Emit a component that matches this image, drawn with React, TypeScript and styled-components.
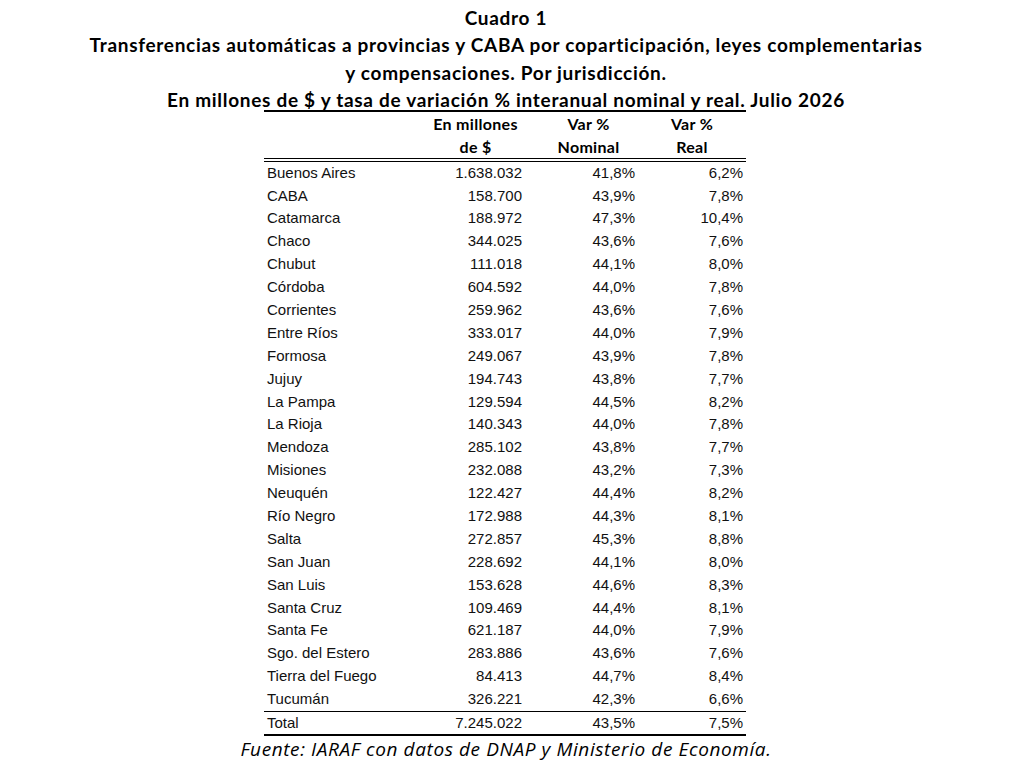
import React from "react";
import styled, { createGlobalStyle } from "styled-components";

const Global = createGlobalStyle`
  html, body { margin: 0; padding: 0; background: #ffffff; }
  body { width: 1010px; height: 770px; overflow: hidden; color: #000; }
`;

const Page = styled.div`
  width: 1010px;
  display: flex;
  flex-direction: column;
  align-items: center;
  padding-top: 4px;
`;

const Title = styled.h1`
  margin: 0;
  font-family: Lato, "Open Sans", sans-serif;
  font-weight: 700;
  font-size: 19px;
  letter-spacing: 0.7px;
  line-height: 27.4px;
  text-align: center;
  color: #000;
  transform: translateX(1px);
`;

const Table = styled.div`
  width: 482px;
  margin-top: -4px;
  display: grid;
  grid-template-columns: 150px 111px 113px 108px;
  border-top: 2px solid #000;
  border-bottom: 2px solid #000;
  font-family: "Liberation Sans", Arial, sans-serif;
  font-size: 15px;
  color: #111;
`;

const HeadCell = styled.div<{ $shift?: number; $last?: boolean }>`
  height: 23px;
  line-height: 23px;
  text-align: center;
  padding-left: ${(p) => p.$shift ?? 0}px;
  font-family: Lato, "Open Sans", sans-serif;
  font-weight: 700;
  font-size: 16px;
  letter-spacing: 0.3px;
  color: #000;
  ${(p) => (p.$last ? "border-bottom: 4px double #000;" : "")}
`;

const Cell = styled.div<{ $num?: boolean; $total?: boolean }>`
  height: ${(p) => (p.$total ? "22px" : "22.9px")};
  line-height: ${(p) => (p.$total ? "22px" : "22.9px")};
  white-space: nowrap;
  text-align: ${(p) => (p.$num ? "right" : "left")};
  padding: ${(p) => (p.$num ? "0 3px 0 0" : "0 0 0 3px")};
  ${(p) => (p.$total ? "border-top: 1px solid #000;" : "")}
`;

const NumCell = styled(Cell)`
  padding-right: 3px;
`;

const Source = styled.p`
  margin: 1px 0 0;
  font-family: "Open Sans", Lato, sans-serif;
  font-style: italic;
  font-size: 19px;
  letter-spacing: 0.6px;
  line-height: 24px;
  color: #000;
  transform: translateX(1px);
`;

const rows: [string, string, string, string][] = [
  ["Buenos Aires", "1.638.032", "41,8%", "6,2%"],
  ["CABA", "158.700", "43,9%", "7,8%"],
  ["Catamarca", "188.972", "47,3%", "10,4%"],
  ["Chaco", "344.025", "43,6%", "7,6%"],
  ["Chubut", "111.018", "44,1%", "8,0%"],
  ["Córdoba", "604.592", "44,0%", "7,8%"],
  ["Corrientes", "259.962", "43,6%", "7,6%"],
  ["Entre Ríos", "333.017", "44,0%", "7,9%"],
  ["Formosa", "249.067", "43,9%", "7,8%"],
  ["Jujuy", "194.743", "43,8%", "7,7%"],
  ["La Pampa", "129.594", "44,5%", "8,2%"],
  ["La Rioja", "140.343", "44,0%", "7,8%"],
  ["Mendoza", "285.102", "43,8%", "7,7%"],
  ["Misiones", "232.088", "43,2%", "7,3%"],
  ["Neuquén", "122.427", "44,4%", "8,2%"],
  ["Río Negro", "172.988", "44,3%", "8,1%"],
  ["Salta", "272.857", "45,3%", "8,8%"],
  ["San Juan", "228.692", "44,1%", "8,0%"],
  ["San Luis", "153.628", "44,6%", "8,3%"],
  ["Santa Cruz", "109.469", "44,4%", "8,1%"],
  ["Santa Fe", "621.187", "44,0%", "7,9%"],
  ["Sgo. del Estero", "283.886", "43,6%", "7,6%"],
  ["Tierra del Fuego", "84.413", "44,7%", "8,4%"],
  ["Tucumán", "326.221", "42,3%", "6,6%"],
];

const total: [string, string, string, string] = ["Total", "7.245.022", "43,5%", "7,5%"];

export default function App() {
  return (
    <>
      <Global />
      <Page>
        <Title>
          Cuadro 1
          <br />
          Transferencias automáticas a provincias y CABA por coparticipación, leyes complementarias
          <br />
          y compensaciones. Por jurisdicción.
          <br />
          En millones de $ y tasa de variación % interanual nominal y real. Julio 2026
        </Title>
        <Table>
          <HeadCell />
          <HeadCell $shift={12}>En millones</HeadCell>
          <HeadCell $shift={14}>Var %</HeadCell>
          <HeadCell>Var %</HeadCell>
          <HeadCell $last />
          <HeadCell $last $shift={12}>de $</HeadCell>
          <HeadCell $last $shift={14}>Nominal</HeadCell>
          <HeadCell $last>Real</HeadCell>
          {rows.map((r) => (
            <React.Fragment key={r[0]}>
              <Cell>{r[0]}</Cell>
              <NumCell $num>{r[1]}</NumCell>
              <NumCell $num>{r[2]}</NumCell>
              <NumCell $num>{r[3]}</NumCell>
            </React.Fragment>
          ))}
          <Cell $total>{total[0]}</Cell>
          <NumCell $num $total>{total[1]}</NumCell>
          <NumCell $num $total>{total[2]}</NumCell>
          <NumCell $num $total>{total[3]}</NumCell>
        </Table>
        <Source>Fuente: IARAF con datos de DNAP y Ministerio de Economía.</Source>
      </Page>
    </>
  );
}
